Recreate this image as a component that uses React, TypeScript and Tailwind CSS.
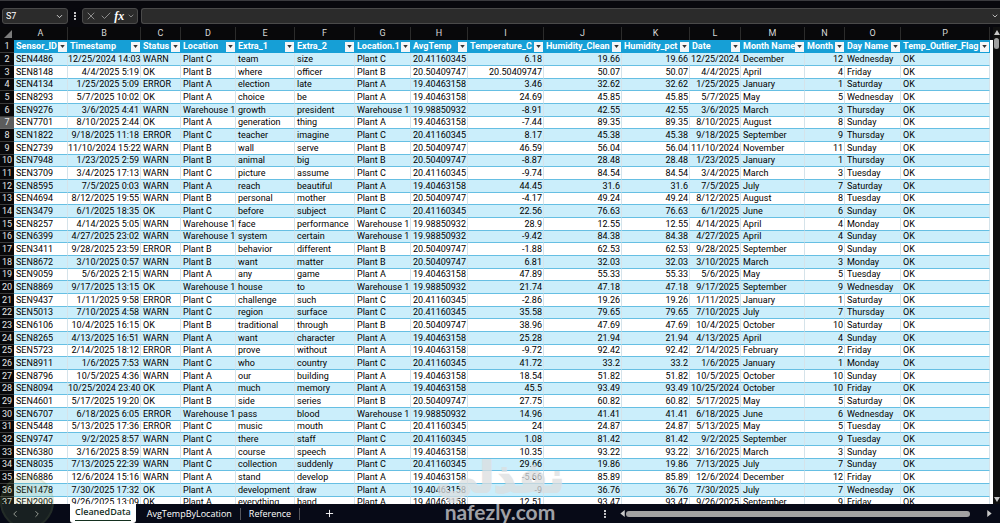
import { ChevronDown, ChevronLeft, ChevronRight, Check, EllipsisVertical, Plus, X } from "lucide-react";
import { useState } from "react";

type Column = { letter: string; name: string; width: string; right?: boolean };

const COLUMNS: Column[] = [
  { letter: "A", name: "Sensor_ID", width: "w-[54px]" },
  { letter: "B", name: "Timestamp", width: "w-[73px]", right: true },
  { letter: "C", name: "Status", width: "w-[40px]" },
  { letter: "D", name: "Location", width: "w-[55px]" },
  { letter: "E", name: "Extra_1", width: "w-[59px]" },
  { letter: "F", name: "Extra_2", width: "w-[60px]" },
  { letter: "G", name: "Location.1", width: "w-[56px]" },
  { letter: "H", name: "AvgTemp", width: "w-[57px]", right: true },
  { letter: "I", name: "Temperature_C", width: "w-[76px]", right: true },
  { letter: "J", name: "Humidity_Clean", width: "w-[78px]", right: true },
  { letter: "K", name: "Humidity_pct", width: "w-[68px]", right: true },
  { letter: "L", name: "Date", width: "w-[51px]", right: true },
  { letter: "M", name: "Month Name", width: "w-[64px]" },
  { letter: "N", name: "Month", width: "w-[40px]", right: true },
  { letter: "O", name: "Day Name", width: "w-[56px]" },
  { letter: "P", name: "Temp_Outlier_Flag", width: "w-[89px]" },
];

const MONTHS = ["January", "February", "March", "April", "May", "June", "July", "August", "September", "October", "November", "December"];

const LOCATIONS: Record<string, [string, string]> = {
  A: ["Plant A", "19.40463158"],
  B: ["Plant B", "20.50409747"],
  C: ["Plant C", "20.41160345"],
  W: ["Warehouse 1", "19.98850932"],
};

// id | timestamp | status | location | extra 1 | extra 2 | temperature | humidity | day
const RAW = `4486|12/25/2024 14:03|WARN|C|team|size|6.18|19.66|Wednesday
8148|4/4/2025 5:19|OK|B|where|officer|20.50409747|50.07|Friday
4134|1/25/2025 5:09|ERROR|A|election|late|3.46|32.62|Saturday
8293|5/7/2025 10:02|OK|A|choice|be|24.69|45.85|Wednesday
9276|3/6/2025 4:41|WARN|W|growth|president|-8.91|42.55|Thursday
7701|8/10/2025 2:44|OK|A|generation|thing|-7.44|89.35|Sunday
1822|9/18/2025 11:18|ERROR|C|teacher|imagine|8.17|45.38|Thursday
2739|11/10/2024 15:22|WARN|B|wall|serve|46.59|56.04|Sunday
7948|1/23/2025 2:59|WARN|B|animal|big|-8.87|28.48|Thursday
3709|3/4/2025 17:13|WARN|C|picture|assume|-9.74|84.54|Tuesday
8595|7/5/2025 0:03|WARN|A|reach|beautiful|44.45|31.6|Saturday
4694|8/12/2025 19:55|WARN|B|personal|mother|-4.17|49.24|Tuesday
3479|6/1/2025 18:35|OK|C|before|subject|22.56|76.63|Sunday
8257|4/14/2025 5:05|WARN|W|face|performance|28.9|12.55|Monday
6399|4/27/2025 23:02|WARN|W|system|certain|-9.42|84.38|Sunday
3411|9/28/2025 23:59|ERROR|B|behavior|different|-1.88|62.53|Sunday
8672|3/10/2025 0:57|WARN|B|want|matter|6.81|32.03|Monday
9059|5/6/2025 2:15|WARN|A|any|game|47.89|55.33|Tuesday
8869|9/17/2025 13:15|OK|W|house|to|21.74|47.18|Wednesday
9437|1/11/2025 9:58|ERROR|C|challenge|such|-2.86|19.26|Saturday
5013|7/10/2025 4:58|WARN|C|region|surface|35.58|79.65|Thursday
6106|10/4/2025 16:15|OK|B|traditional|through|38.96|47.69|Saturday
8265|4/13/2025 16:51|WARN|A|want|character|25.28|21.94|Sunday
5723|2/14/2025 18:12|ERROR|A|prove|without|-9.72|92.42|Friday
8911|1/6/2025 7:53|WARN|C|who|country|41.72|33.2|Monday
8796|10/5/2025 4:36|WARN|A|our|building|18.54|51.82|Sunday
8094|10/25/2024 23:40|OK|A|much|memory|45.5|93.49|Friday
4601|5/17/2025 19:20|OK|B|side|series|27.75|60.82|Saturday
6707|6/18/2025 6:05|ERROR|W|pass|blood|14.96|41.41|Wednesday
5448|5/13/2025 17:36|ERROR|C|music|mouth|24|24.87|Tuesday
9747|9/2/2025 8:57|WARN|C|there|staff|1.08|81.42|Tuesday
6380|3/16/2025 8:59|WARN|A|course|speech|10.35|93.22|Sunday
8035|7/13/2025 22:39|WARN|C|collection|suddenly|29.66|19.86|Sunday
6886|12/6/2024 15:16|WARN|A|stand|develop|-5.66|85.89|Friday
1478|7/30/2025 17:32|OK|A|development|draw|-9|36.76|Wednesday
2909|9/26/2025 13:09|OK|A|everything|hand|12.51|93.47|Friday`;

const ROWS = RAW.split("\n").map((line) => {
  const [id, stamp, status, loc, extra1, extra2, temp, humidity, day] = line.split("|");
  const date = stamp.split(" ")[0];
  const month = Number(date.split("/")[0]);
  const [place, avg] = LOCATIONS[loc];
  return ["SEN" + id, stamp, status, place, extra1, extra2, place, avg, temp, humidity, humidity, date, MONTHS[month - 1], String(month), day, "OK"];
});

const SHEETS = ["CleanedData", "AvgTempByLocation", "Reference"];

function FormulaBar() {
  return (
    <header className="flex h-[27px] shrink-0 items-center border-t border-[#3a3a3e] bg-[#08080d] pt-1 text-white">
      <div className="ml-[2px] flex h-[16px] w-[66px] items-center rounded-[3px] border border-[#4a4a4a] bg-[#2b2b2b] px-[3px]">
        <input aria-label="Name box" defaultValue="S7" className="w-full min-w-0 bg-transparent text-[9px] leading-[12px] outline-none" />
        <ChevronDown className="size-[9px] shrink-0" />
      </div>
      <EllipsisVertical className="mx-[2px] size-[10px]" strokeWidth={3} />
      <div className="flex h-[16px] w-[56px] items-center justify-between rounded-[3px] border border-[#4a4a4a] bg-[#2b2b2b] px-[2px]">
        <button aria-label="Cancel" className="text-[#8c8c8c]"><X className="size-[12px]" strokeWidth={2} /></button>
        <button aria-label="Enter" className="text-[#8c8c8c]"><Check className="size-[12px]" strokeWidth={2} /></button>
        <button className="font-['Liberation_Serif',serif] text-[12px] leading-[12px] font-bold italic">fx</button>
        <ChevronDown className="size-[8px] text-[#b0b0b0]" />
      </div>
      <div className="ml-[3px] flex h-[16px] flex-1 items-center rounded-l-[3px] border border-r-0 border-[#4a4a4a] bg-[#2b2b2b]">
        <input aria-label="Formula" className="min-w-0 flex-1 bg-transparent text-[9px] outline-none" />
        <ChevronDown className="mr-[1px] size-[8px] shrink-0" />
      </div>
    </header>
  );
}

function Grid() {
  return (
    <table className="w-full table-fixed border-separate border-spacing-0 text-[9px] leading-[11px] whitespace-nowrap text-black">
      <colgroup>
        <col className="w-[14px]" />
        {COLUMNS.map((c) => <col key={c.letter} className={c.width} />)}
      </colgroup>
      <thead>
        <tr className="h-[13px] bg-[#08080a] text-[#d8d8d8]">
          <th className="p-0">
            <svg viewBox="0 0 14 13" className="block h-[13px] w-full"><path d="M12 3v8H4z" fill="#7c7c7c" /></svg>
          </th>
          {COLUMNS.map((c) => <th key={c.letter} className="border-r border-[#2c2c2c] p-0 font-normal">{c.letter}</th>)}
        </tr>
        <tr className="h-[13px] bg-[#169fd6] text-white">
          <th className="border-b border-[#3a3a3a] bg-[#08080a] p-0 font-normal text-[#e4e4e4]">1</th>
          {COLUMNS.map((c) => (
            <th key={c.letter} className="p-0">
              <div className="flex items-center justify-between pr-[1px] pl-[2px]">
                <span>{c.name}</span>
                <button aria-label={"Filter " + c.name} className="flex h-[10px] w-[9px] shrink-0 items-center justify-center bg-[#f4f6f8]">
                  <svg viewBox="0 0 6 4" className="h-[3px] w-[5px]"><path d="M0 0h6L3 4z" fill="#333" /></svg>
                </button>
              </div>
            </th>
          ))}
        </tr>
      </thead>
      <tbody>
        {ROWS.map((row, i) => (
          <tr key={row[0]} className="h-[13px] odd:bg-[#cbeefb] even:bg-white [&:nth-child(3n)]:h-[12px]">
            <th className={"border-b p-0 font-normal text-[#e4e4e4] " + (i === 5 ? "border-[#6a6a6a] bg-[#5c5c5c]" : "border-[#3a3a3a] bg-[#08080a]")}>{i + 2}</th>
            {row.map((value, j) => (
              <td key={j} className={"border-r border-b border-r-[#d5e3ea] border-b-[#66bfe3] p-0 " + (COLUMNS[j].right ? "pr-[1px] text-right" : "pl-[2px] text-left")}>
                {value}
              </td>
            ))}
          </tr>
        ))}
      </tbody>
    </table>
  );
}

function SheetBar() {
  const [active, setActive] = useState(SHEETS[0]);
  return (
    <footer className="flex h-[19px] shrink-0 items-center bg-[#070a17] text-white">
      <div className="flex w-[70px] items-center gap-3 pl-[10px] text-[#b5b5b5]">
        <button aria-label="Previous sheet"><ChevronLeft className="size-[10px]" /></button>
        <button aria-label="Next sheet"><ChevronRight className="size-[10px]" /></button>
      </div>
      <nav className="flex h-full items-center font-['Open_Sans',sans-serif] text-[9px] leading-[12px] font-medium">
        {SHEETS.map((name) =>
          name === active ? (
            <button key={name} className="mr-[3px] flex h-full items-start rounded-b-[3px] bg-white px-[5px] pt-[2px] font-semibold text-[#14301f]">
              <span className="border-b border-[#14301f] pb-[2px]">{name}</span>
            </button>
          ) : (
            <button key={name} onClick={() => setActive(name)} className="border-r border-[#55565c] px-[8px]">{name}</button>
          )
        )}
      </nav>
      <button aria-label="New sheet" className="ml-[24px]"><Plus className="size-[11px]" /></button>
      <EllipsisVertical className="ml-auto size-[10px]" strokeWidth={3} />
      <div className="ml-[10px] flex w-[38%] items-center">
        <svg viewBox="0 0 6 8" className="h-[7px] w-[6px] shrink-0"><path d="M5 0v8L0 4z" fill="#c8c8c8" /></svg>
        <div className="h-[6px] w-[344px] rounded-full bg-[#a2a2a2]" />
        <svg viewBox="0 0 6 8" className="ml-auto mr-[8px] h-[7px] w-[6px] shrink-0"><path d="M1 0v8l5-4z" fill="#c8c8c8" /></svg>
      </div>
    </footer>
  );
}

export default function App() {
  return (
    <div className="relative flex h-screen flex-col overflow-hidden bg-[#08080d] font-[Roboto,sans-serif]">
      <FormulaBar />
      <main className="flex min-h-0 flex-1">
        <div className="min-w-0 flex-1 overflow-hidden"><Grid /></div>
        <div className="mt-[13px] w-[3px] bg-white" />
        <div className="flex w-[7px] flex-col items-center justify-between bg-[#101010] pt-[3px] pb-[2px]">
          <svg viewBox="0 0 6 5" className="h-[5px] w-[6px]"><path d="M0 5h6L3 0z" fill="#c8c8c8" /></svg>
          <div className="mt-[3px] mb-auto h-[11px] w-[5px] rounded-full bg-[#a2a2a2]" />
          <svg viewBox="0 0 6 5" className="h-[5px] w-[6px]"><path d="M0 0h6L3 5z" fill="#c8c8c8" /></svg>
        </div>
      </main>
      <SheetBar />
      <div className="pointer-events-none absolute -bottom-[6px] left-0 size-[54px] rounded-full border-2 border-[#7f9f5f]/10 bg-[#7f9f5f]/15" />
      <div className="pointer-events-none absolute bottom-0 left-1/2 flex -translate-x-1/2 flex-col items-center opacity-75">
        <span lang="ar" dir="rtl" className="font-['DejaVu_Sans',sans-serif] text-[42px] leading-[44px] font-bold text-[#dcdee0] [-webkit-text-stroke:2px_#dcdee0]">نفذلي</span>
        <span className="font-['Lato',sans-serif] text-[21px] leading-[23px] font-bold text-[#d2d3d6]">nafezly.com</span>
      </div>
    </div>
  );
}
